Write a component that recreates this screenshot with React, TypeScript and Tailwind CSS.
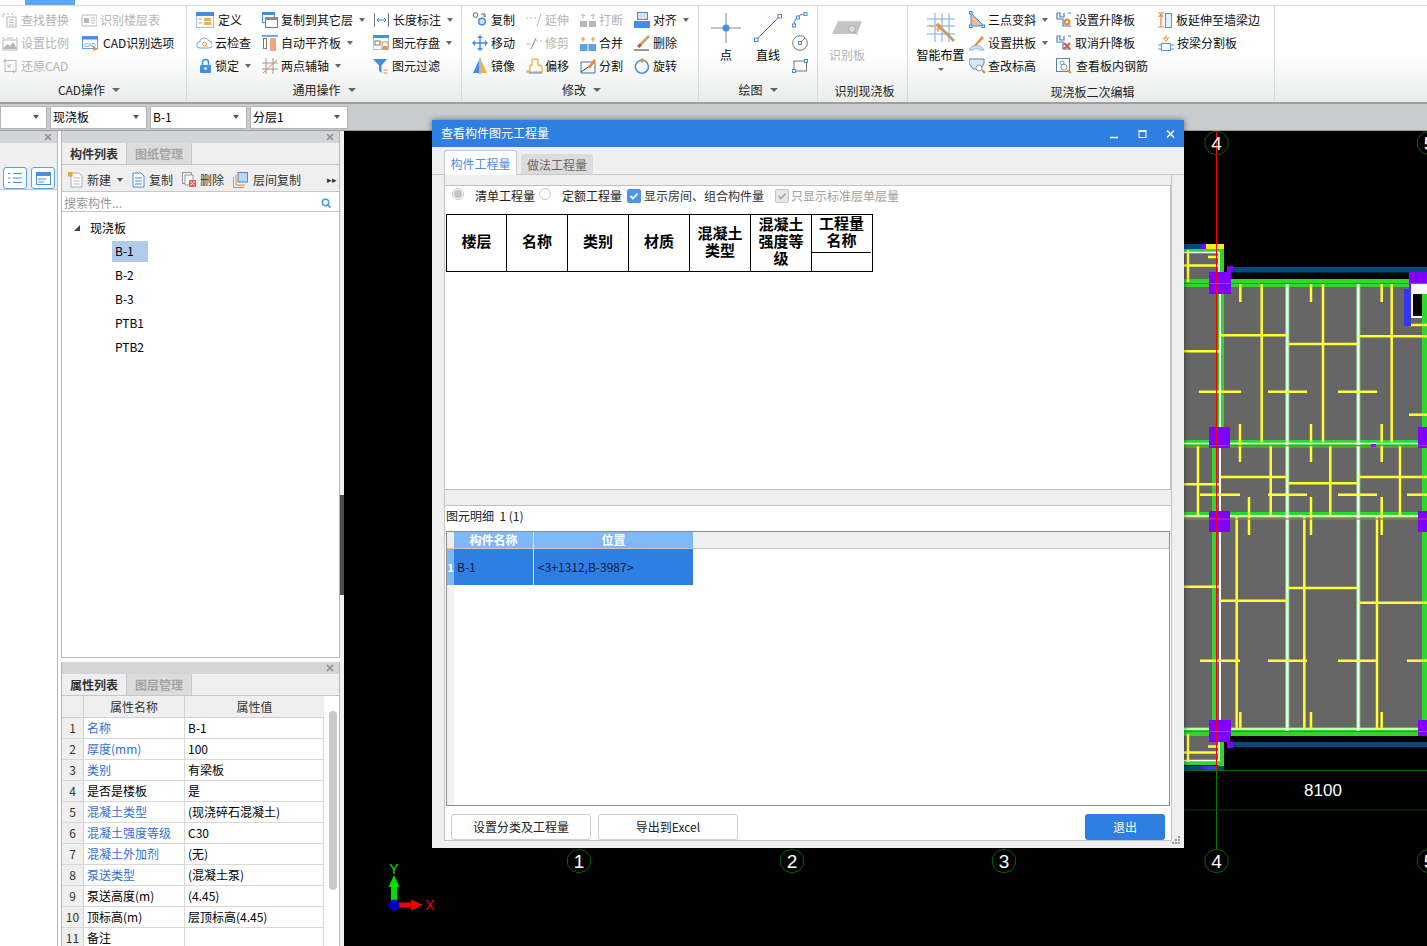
import React from "react";

const B = "#3f8ee8";
const O = "#f08a35";
const G = "#b8b8b8";

const S = ({ w = 16, h = 16, vb, children }: { w?: number; h?: number; vb?: string; children: React.ReactNode }) => (
  <svg width={w} height={h} viewBox={vb ?? `0 0 ${w} ${h}`} fill="none" className="shrink-0 block">
    {children}
  </svg>
);

const icons: Record<string, React.ReactNode> = {
  find: <S><rect x="5" y="5" width="9" height="10" stroke={G} /><path d="M7 8h5M7 10.500h5M7 13h5M1 2h2M5 2h2M9 2h2M1 2v3" stroke={G} /></S>,
  floor: <S><rect x="1" y="3" width="15" height="11" rx="1" stroke={G} /><rect x="3" y="6" width="5" height="5" fill={G} /><path d="M10 6h4M10 8.500h4M10 11h4" stroke={G} /></S>,
  scale: <S><path d="M1 14l4-5 3 2 3-4 4 7z" fill={G} /><rect x="1" y="5" width="14" height="10" stroke={G} /><path d="M1 2v2M15 2v2M5 3h6" stroke={G} /></S>,
  cad: <S><rect x="0.500" y="1.500" width="15" height="12" fill="#fff" stroke="#5ba3ee" /><rect x="0.500" y="1.500" width="15" height="3" fill={B} /><text x="2" y="11.500" fontSize="5.500" fill={B} fontFamily="Liberation Sans">CAD</text><path d="M11 11l5 3-5 2z" fill={O} /></S>,
  restore: <S><rect x="3" y="2.500" width="11" height="11" stroke={G} /><path d="M1 3h3M3 1v3M12 12v3M6 9l3-3M6 6v3h3" stroke={G} /></S>,
  define: <S w={18} h={16}><rect x="0.500" y="0.500" width="17" height="15" fill="#fff" stroke="#9cc5f0" /><rect x="0" y="0" width="18" height="4" fill={B} /><path d="M3 7h3M3 11h3" stroke="#999" /><rect x="8" y="6" width="7" height="3" fill="#f3b14e" /><rect x="8" y="10" width="7" height="3" fill="#f3b14e" /></S>,
  cloud: <S><path d="M4 13a3 3 0 0 1-.5-6A5 5 0 0 1 13 6a3.500 3.500 0 0 1 0 7z" stroke="#64a8ec" fill="#fff" /><circle cx="8.500" cy="9" r="2" stroke={O} /><path d="M10 10.500l1.500 1.500" stroke={O} /></S>,
  lock: <S w={13} h={16}><path d="M3.500 7V4.500a3 3 0 0 1 6 0V7" stroke={B} strokeWidth="1.500" /><rect x="1" y="7" width="11" height="8" rx="1" fill={B} /><circle cx="6.500" cy="10.500" r="1.300" fill="#fff" /></S>,
  copyfloor: <S><rect x="0.500" y="0.500" width="12" height="10" fill="#fff" stroke={B} /><rect x="0" y="0" width="13" height="3" fill={B} /><rect x="3.500" y="5.500" width="12" height="10" fill="#fff" stroke="#777" /><rect x="3" y="5" width="13" height="3" fill="#8a8a8a" /></S>,
  align: <S><path d="M0 1h16" stroke={B} strokeWidth="1.500" /><rect x="1.500" y="3.500" width="3" height="10" fill="#fff" stroke="#777" /><rect x="8" y="3" width="6" height="13" fill="#f4a47a" /></S>,
  axis: <S><path d="M4 0v16M11 0v16M0 5h16M0 11h16" stroke="#9a9a9a" /><path d="M1 15L15 2" stroke={O} /></S>,
  dim: <S w={15} h={16}><path d="M.5 1v14M14.500 1v14" stroke="#777" /><path d="M3 8h9M3 8l2-2M3 8l2 2M12 8l-2-2M12 8l-2 2" stroke={B} /></S>,
  save: <S><rect x="0.500" y="0.500" width="15" height="14" fill="#fff" stroke="#9cc5f0" /><rect width="16" height="3" fill={B} /><rect x="2" y="6" width="5" height="4" stroke="#777" /><rect x="9" y="7" width="6" height="7" fill="#fff" stroke={O} /><rect x="10" y="11" width="4" height="3" fill={O} /></S>,
  filter: <S w={15} h={16}><path d="M0 1h14L8.500 7.500V15L6 13V7.500z" fill={B} /><path d="M10.500 12h4M10.500 15h4" stroke={O} /></S>,
  copy: <S><circle cx="3.500" cy="3" r="2.300" stroke="#666" /><circle cx="10" cy="9.500" r="3.300" fill="#cfe3f8" stroke={B} strokeWidth="1.500" /><path d="M9 2h4v3M13 5l-2-1.500" stroke="#666" /></S>,
  move: <S><path d="M8 2v12M2 8h12" stroke={B} strokeWidth="1.500" /><path d="M8 0l3 3H5zM8 16l3-3H5zM0 8l3-3v6zM16 8l-3-3v6z" fill={B} /></S>,
  mirror: <S><path d="M7 2v13H1z" fill={B} /><path d="M9 2v13h6z" fill="#f5b52e" /><path d="M8 0v16" stroke="#777" /></S>,
  extend: <S><path d="M0 6h2M4 6h2M8 6h2" stroke={G} /><path d="M11 14L15 2" stroke={G} /></S>,
  trim: <S><path d="M0 9h5M10 6h2M14 6h2" stroke={G} strokeWidth="1" /><path d="M5 14L10 3" stroke="#888" /></S>,
  offset: <S w={17} h={16}><path d="M1 13h3V8a1 1 0 0 1 1-1h1V3a2 2 0 0 1 2-2h2a2 2 0 0 1 2 2v4h1a3 3 0 0 1 3 3v4H1z" fill="#fff" stroke="#f3b14e" strokeWidth="1.300" /><path d="M3 15h13" stroke={B} /></S>,
  breakk: <S><rect x="0" y="9" width="7" height="6" fill={G} /><rect x="9" y="9" width="7" height="6" fill={G} /><path d="M3 2v5M13 2v5" stroke={G} /><path d="M1 4l2-2 2 2M11 4l2-2 2 2" stroke={G} /></S>,
  merge: <S><rect x="0" y="9" width="16" height="7" fill="#5ba3ee" /><path d="M8 9v7" stroke="#fff" /><path d="M3 2v5M13 2v5M1 4h4M11 4h4" stroke={O} /></S>,
  split: <S w={16} h={17}><path d="M1 5h14v11H1z" stroke="#4a6fa5" /><path d="M1 15L14 6" stroke="#555" /><path d="M8 10l6-8 2 1.500-6 8z" fill={O} /></S>,
  alignr: <S><rect x="3.500" y="0.500" width="10" height="7" fill="#cfe3f8" stroke={B} /><rect x="0" y="9" width="16" height="7" fill={B} /></S>,
  del: <S w={16} h={17}><path d="M6 9L14 1l2 2-8 8z" fill="#c5a574" /><path d="M6 9l2 2-2.500 3L3 12z" fill="#c8501e" /><path d="M0 16h15" stroke="#333" /></S>,
  rotate: <S><path d="M7 2.300A6.500 6.500 0 1 0 11 3" stroke={B} strokeWidth="1.500" /><path d="M7 0l5 2.500L7 5z" fill={O} /></S>,
  arc: <S w={16} h={16}><path d="M2 14C2 7 7 2 13 2" stroke="#777" /><rect x="0.500" y="12" width="3" height="3" fill="#fff" stroke={B} /><rect x="12" y="0.500" width="3" height="3" fill="#fff" stroke={B} /><rect x="4.500" y="4" width="3" height="3" fill="#fff" stroke={B} /></S>,
  circle: <S w={16} h={16}><circle cx="8" cy="8" r="7.300" stroke="#777" /><rect x="6.500" y="6.500" width="3" height="3" fill="#fff" stroke={B} /><path d="M10 6l3-3" stroke="#777" /></S>,
  rect: <S w={16} h={14}><rect x="2" y="2" width="12.500" height="10" stroke="#777" /><rect x="0.500" y="10.500" width="3" height="3" fill="#fff" stroke={B} /><rect x="12.500" y="0.500" width="3" height="3" fill="#fff" stroke={B} /></S>,
  threept: <S w={16} h={17}><path d="M2 2v13h13z" fill="#f4b892" stroke={B} /><rect x="0.500" y="0.500" width="2.500" height="2.500" fill="#fff" stroke={B} /><rect x="0.500" y="14" width="2.500" height="2.500" fill="#fff" stroke={B} /><rect x="13" y="14" width="2.500" height="2.500" fill="#fff" stroke={B} /></S>,
  arch: <S w={16} h={16}><path d="M6 9l7-8 2 2-7 7-3 1z" fill={O} /><path d="M0 15c3-6 11-6 15 0H11c-2-2-5-2-7 0z" fill="#cfe3f8" stroke="#7fb0e6" /></S>,
  elev: <S w={17} h={16}><path d="M0 1h15v4l-3 6H4L0 5z" fill="#d9e6f3" stroke="#5a84b0" /><circle cx="10" cy="10" r="3" fill="#fff" stroke="#8a9db0" /><path d="M13 12l3 3" stroke={O} strokeWidth="2" /></S>,
  rise: <S w={16} h={16}><path d="M1 1v6h6v7h8M1 1h3v4h4v-4M12 1h3" stroke="#4a7fc0" strokeWidth="1.200" /><circle cx="11" cy="10" r="3.500" fill={O} /><circle cx="11" cy="10" r="1.300" fill="#fff" /></S>,
  unrise: <S w={16} h={16}><path d="M1 1v6h6v7h8M1 1h3v4h4v-4M12 1h3" stroke="#4a7fc0" strokeWidth="1.200" /><path d="M8 8l6 6M14 8l-6 6" stroke="#d9573a" strokeWidth="2" /></S>,
  rebar: <S w={17} h={16}><rect x="0.500" y="0.500" width="13" height="13" fill="#fff" stroke="#5a84b0" /><circle cx="6" cy="5" r="2" stroke="#8a9db0" /><circle cx="8" cy="9" r="3" stroke="#8a9db0" /><path d="M11 12l4 3" stroke={O} strokeWidth="2" /></S>,
  ext: <S w={14} h={16}><rect x="7.500" y="1.500" width="6" height="14" fill="#e8f1fb" stroke="#5a94d8" /><path d="M3 15V3M1 5l2-3 2 3" stroke={O} strokeWidth="1.300" /><path d="M0 1h6M0 15h6" stroke={O} /></S>,
  beamsplit: <S w={16} h={16}><path d="M8 0v3M5.500 3h5L8 6.500z" stroke={O} /><rect x="3.500" y="8.500" width="9" height="7" fill="#fff" stroke="#5a94d8" /><path d="M0 10h3M13 10h3M0 14h3M13 14h3" stroke="#5a94d8" /></S>,
  "new": <S w={15} h={16}><path d="M3 1h8l3 3v11H3z" fill="#fff" stroke="#aaa" /><path d="M5 6h7M5 9h7M5 12h7" stroke="#bbb" /><rect x="0" y="0" width="4.500" height="4.500" fill="#f5a623" /></S>,
  pcopy: <S w={13} h={16}><path d="M1 1h8l3 3v11H1z" fill="#fff" stroke={B} /><path d="M3 6h7M3 9h7M3 12h7" stroke={B} /></S>,
  pdel: <S w={14} h={16}><path d="M0.500 0.500h9v11h-9z" stroke="#999" /><path d="M3 3h8v10H3z" fill="#fff" stroke="#999" /><rect x="7" y="8" width="7" height="7" fill="#e06060" /><path d="M8.500 9.500l4 4M12.500 9.500l-4 4" stroke="#fff" /></S>,
  pfloor: <S w={15} h={16}><path d="M0.500 15.500V5M0.500 15.500H11M3 13V3M3 13h9" stroke={O} /><rect x="5" y="0.500" width="9.500" height="9.500" fill="#bcd8f6" stroke={B} /></S>,
};

const Caret = () => <span className="ml-[6px] w-0 h-0 border-x-[3.5px] border-x-transparent border-t-[4px] border-t-[#666] shrink-0" />;

function Item({ icon, label, caret, off, w, gap = 3 }: { icon: string; label: string; caret?: boolean; off?: boolean; w?: string; gap?: number }) {
  return (
    <div className={`flex items-center h-[23px] whitespace-nowrap leading-none ${off ? "text-[#b4b4b4]" : "text-[#111]"}`}>
      <span className={`flex justify-center items-center shrink-0 ${w ?? "w-[16px]"}`}>{icons[icon]}</span>
      <span style={{ marginLeft: gap }}>{label}</span>
      {caret && <Caret />}
    </div>
  );
}

const Label = ({ children, caret }: { children: React.ReactNode; caret?: boolean }) => (
  <div className="h-[22px] flex items-center justify-center text-[#222] leading-none whitespace-nowrap">
    {children}
    {caret && <span className="ml-[7px] w-0 h-0 border-x-[4px] border-x-transparent border-t-[4px] border-t-[#666]" />}
  </div>
);

function Group({ w, label, caret, children, pl, labelClass }: { w: string; label: string; caret?: boolean; children: React.ReactNode; pl: string; labelClass?: string }) {
  return (
    <div className={`${w} h-full flex flex-col border-r border-[#d7dada] shrink-0`}>
      <div className={`flex h-[73px] pt-[2px] ${pl}`}>{children}</div>
      <div className={labelClass}><Label caret={caret}>{label}</Label></div>
    </div>
  );
}

function Ribbon() {
  return (
    <div className="h-[98px] flex bg-gradient-to-b from-white from-50% to-[#eaecec] border-b-2 border-[#9c9ea0] shrink-0">
      <Group w="w-[187px]" label="CAD操作" caret pl="pl-[2px]" labelClass="pr-[8px]">
        <div className="w-[79px]">
          <Item icon="find" label="查找替换" off />
          <Item icon="scale" label="设置比例" off />
          <Item icon="restore" label="还原CAD" off />
        </div>
        <div>
          <Item icon="floor" label="识别楼层表" off />
          <div className="ml-[1px]"><Item icon="cad" label="CAD识别选项" gap={5} /></div>
        </div>
      </Group>
      <Group w="w-[275px]" label="通用操作" caret pl="pl-[9px]">
        <div className="w-[66px]">
          <Item icon="define" label="定义" w="w-[18px]" gap={4} />
          <Item icon="cloud" label="云检查" gap={3} />
          <div className="ml-[3px]"><Item icon="lock" label="锁定" caret w="w-[13px]" /></div>
        </div>
        <div className="w-[111px]">
          <Item icon="copyfloor" label="复制到其它层" caret />
          <Item icon="align" label="自动平齐板" caret />
          <Item icon="axis" label="两点辅轴" caret />
        </div>
        <div>
          <Item icon="dim" label="长度标注" caret gap={4} />
          <Item icon="save" label="图元存盘" caret gap={3} />
          <Item icon="filter" label="图元过滤" w="w-[15px]" gap={4} />
        </div>
      </Group>
      <Group w="w-[237px]" label="修改" caret pl="pl-[10px]" labelClass="pl-[3px]">
        <div className="w-[54px]">
          <Item icon="copy" label="复制" />
          <Item icon="move" label="移动" />
          <Item icon="mirror" label="镜像" />
        </div>
        <div className="w-[54px]">
          <Item icon="extend" label="延伸" off />
          <Item icon="trim" label="修剪" off />
          <Item icon="offset" label="偏移" w="w-[17px]" gap={2} />
        </div>
        <div className="w-[54px]">
          <Item icon="breakk" label="打断" off />
          <Item icon="merge" label="合并" />
          <Item icon="split" label="分割" />
        </div>
        <div>
          <Item icon="alignr" label="对齐" caret />
          <Item icon="del" label="删除" />
          <Item icon="rotate" label="旋转" />
        </div>
      </Group>
      <Group w="w-[119px]" label="绘图" caret pl="pl-[11px]">
        <div className="w-[32px] flex flex-col items-center">
          <svg width="30" height="30" viewBox="0 0 30 30" className="mt-[5px]">
            <path d="M15 0v30M0 15h30" stroke="#888" />
            <circle cx="15" cy="15" r="3.500" fill={B} />
          </svg>
          <span className="mt-[6px] leading-none">点</span>
        </div>
        <div className="w-[50px] ml-[1px] flex flex-col items-center">
          <svg width="28" height="28" viewBox="0 0 28 28" className="mt-[6px]">
            <path d="M2 26L26 2" stroke="#666" />
            <rect x="0.500" y="24" width="3.500" height="3.500" fill="#fff" stroke={B} />
            <rect x="24" y="0.500" width="3.500" height="3.500" fill="#fff" stroke={B} />
          </svg>
          <span className="mt-[7px] leading-none">直线</span>
        </div>
        <div className="flex flex-col -ml-[1px]">
          <div className="h-[23px] flex items-center">{icons.arc}</div>
          <div className="h-[23px] flex items-center">{icons.circle}</div>
          <div className="h-[23px] flex items-center">{icons.rect}</div>
        </div>
      </Group>
      <div className="w-[90px] h-full flex flex-col border-r border-[#d7dada] shrink-0">
        <div className="h-[73px] w-[58px] flex flex-col items-center">
          <svg width="30" height="20" viewBox="0 0 30 20" className="mt-[13px]">
            <path d="M6 2h24l-5 13H0z" fill="#c4c4c4" />
            <path d="M6 2h24" stroke="#eee" />
            <circle cx="20" cy="10" r="3.500" fill="#ddd" stroke="#aaa" />
            <path d="M23 13l3 3" stroke="#aaa" />
          </svg>
          <span className="mt-[10px] leading-none text-[#b4b4b4] whitespace-nowrap">识别板</span>
        </div>
        <div className="pt-[4px] pl-[4px]"><Label>识别现浇板</Label></div>
      </div>
      <div className="w-[367px] h-full flex flex-col border-r border-[#d7dada] shrink-0">
        <div className="h-[73px] flex pt-[2px] pl-[4px]">
          <div className="w-[57px] flex flex-col items-center">
            <svg width="30" height="30" viewBox="0 0 30 30" className="mt-[4px]">
              <path d="M9 1v29M16 1v29M23 1v29M1 7h28M1 14h28M1 22h28" stroke="#74a9e6" />
              <path d="M12 11l17 17-2 2L10 13z" fill="#c99b6a" />
              <path d="M12 11l3 3-2 2-3-3z" fill={O} />
              <path d="M9 17h6M12 14v6M3 13l4 2" stroke={O} />
            </svg>
            <span className="mt-[7px] leading-none whitespace-nowrap">智能布置</span>
            <span className="mt-[7px] w-0 h-0 border-x-[3px] border-x-transparent border-t-[3px] border-t-[#666]" />
          </div>
          <div className="w-[87px]">
            <Item icon="threept" label="三点变斜" caret />
            <Item icon="arch" label="设置拱板" caret />
            <Item icon="elev" label="查改标高" />
          </div>
          <div className="w-[102px]">
            <Item icon="rise" label="设置升降板" />
            <Item icon="unrise" label="取消升降板" />
            <Item icon="rebar" label="查看板内钢筋" w="w-[17px]" gap={3} />
          </div>
          <div>
            <Item icon="ext" label="板延伸至墙梁边" w="w-[14px]" gap={4} />
            <Item icon="beamsplit" label="按梁分割板" gap={3} />
          </div>
        </div>
        <div className="pt-[4px] pl-[3px]"><Label>现浇板二次编辑</Label></div>
      </div>
    </div>
  );
}

const Combo = ({ w, text }: { w: string; text?: string }) => (
  <div className={`${w} h-[23px] bg-white border border-[#b4b4b4] flex items-center justify-between pl-[2px] pr-[7px] leading-none`}>
    <span>{text}</span>
    <span className="w-0 h-0 border-x-[3px] border-x-transparent border-t-[4px] border-t-[#555]" />
  </div>
);

const X = () => (
  <svg width="8" height="8" viewBox="0 0 8 8">
    <path d="M1 1l6 6M7 1L1 7" stroke="#8b8b8b" strokeWidth="1.500" />
  </svg>
);

const PanelHead = () => (
  <div className="h-[12px] bg-[#d3d5d9] flex items-center justify-end pr-[5px] shrink-0"><X /></div>
);

const Tabs = ({ a, b }: { a: string; b: string }) => (
  <div className="h-[22px] flex bg-[#efefef] border-b border-[#c4c6c8] shrink-0">
    <div className="w-[65px] flex items-center justify-center font-bold text-[#333] leading-none border-r border-[#c9c9c9]">{a}</div>
    <div className="w-[65px] flex items-center justify-center font-bold text-[#a4a4a4] bg-[#dcdcdc] leading-none border-r border-[#c9c9c9]">{b}</div>
  </div>
);

function ComponentPanel() {
  const tree = ["B-1", "B-2", "B-3", "PTB1", "PTB2"];
  return (
    <div className="w-[279px] h-[527px] border-x border-b border-[#b4b6b8] flex flex-col bg-white">
      <PanelHead />
      <Tabs a="构件列表" b="图纸管理" />
      <div className="h-[27px] pt-[3px] bg-[#efefef] border-b border-[#c4c6c8] flex items-center pl-[6px] text-[#333] leading-none shrink-0">
        {icons["new"]}
        <span className="ml-[4px]">新建</span>
        <span className="ml-[6px] w-0 h-0 border-x-[3px] border-x-transparent border-t-[4px] border-t-[#555]" />
        <span className="ml-[9px]">{icons.pcopy}</span>
        <span className="ml-[4px]">复制</span>
        <span className="ml-[9px]">{icons.pdel}</span>
        <span className="ml-[4px]">删除</span>
        <span className="ml-[9px]">{icons.pfloor}</span>
        <span className="ml-[5px]">层间复制</span>
        <span className="ml-[26px] text-[9px] text-[#333]">▸▸</span>
      </div>
      <div className="h-[20px] pt-[3px] border-b border-[#c4c6c8] flex items-center justify-between pl-[2px] pr-[8px] text-[#999] leading-none shrink-0">
        <span>搜索构件...</span>
        <svg width="10" height="11" viewBox="0 0 10 11">
          <circle cx="4.500" cy="4.500" r="3.200" stroke="#4a9bd8" strokeWidth="1.500" fill="none" />
          <path d="M7 7l2.500 3" stroke="#4a9bd8" strokeWidth="1.500" />
        </svg>
      </div>
      <div className="pt-[5px] leading-none">
        <div className="h-[22px] flex items-center pl-[12px]">
          <span className="w-0 h-0 border-b-[6px] border-b-[#444] border-l-[6px] border-l-transparent" />
          <span className="ml-[10px]">现浇板</span>
        </div>
        {tree.map((t, i) => (
          <div key={t} className="h-[24px] flex items-center pl-[50px]">
            <span className={`h-[21px] flex items-center w-[36px] pl-[3px] ${i === 0 ? "bg-[#b0ccec]" : ""}`}>{t}</span>
          </div>
        ))}
      </div>
    </div>
  );
}

const props: [string, string, boolean][] = [
  ["名称", "B-1", true],
  ["厚度(mm)", "100", true],
  ["类别", "有梁板", true],
  ["是否是楼板", "是", false],
  ["混凝土类型", "(现浇碎石混凝土)", true],
  ["混凝土强度等级", "C30", true],
  ["混凝土外加剂", "(无)", true],
  ["泵送类型", "(混凝土泵)", true],
  ["泵送高度(m)", "(4.45)", false],
  ["顶标高(m)", "层顶标高(4.45)", false],
  ["备注", "", false],
];

function PropPanel() {
  return (
    <div className="w-[279px] flex-1 border-x border-[#b4b6b8] flex flex-col bg-white overflow-hidden">
      <PanelHead />
      <Tabs a="属性列表" b="图层管理" />
      <div className="flex flex-1">
        <div className="w-[262px] leading-none">
          <div className="h-[22px] flex bg-[#efefef] text-[#333] border-b border-[#d0d0d0]">
            <div className="w-[22px] border-r border-[#d0d0d0]" />
            <div className="w-[101px] border-r border-[#d0d0d0] flex items-center justify-center">属性名称</div>
            <div className="flex-1 flex items-center justify-center">属性值</div>
          </div>
          {props.map(([n, v, link], i) => (
            <div key={n} className="h-[21px] flex border-b border-[#d8d8d8] border-r">
              <div className="w-[22px] bg-[#efefef] border-r border-[#d0d0d0] flex items-center justify-center text-[#333]">{i + 1}</div>
              <div className={`w-[101px] border-r border-[#d8d8d8] flex items-center pl-[3px] whitespace-nowrap ${link ? "text-[#2f6fe0]" : ""}`}>{n}</div>
              <div className="flex-1 flex items-center pl-[3px] whitespace-nowrap">{v}</div>
            </div>
          ))}
        </div>
        <div className="flex-1 pt-[15px] pl-[5px]">
          <div className="w-[8px] h-[179px] rounded-[4px] bg-[#c9c9c9]" />
        </div>
      </div>
    </div>
  );
}

const yellow: number[][] = [
  [1240.3,283,1240.3,302],[1261.7,283,1261.7,442],[1311,283,1311,302],[1323,283,1323,442],[1381.7,283,1381.7,302],[1391.7,283,1391.7,442],
  [1220,335.300,1287,335.300],[1287,344,1357,344],[1358,336.300,1427,336.300],[1184,351.300,1219,351.300],
  [1199,391.700,1241,391.700],[1268,391.700,1307,391.700],[1338,391.700,1377,391.700],[1409,414.700,1427,414.700],[1409,325,1427,325],
  [1240,424,1240,442],[1311,424,1311,442],[1381.7,424,1381.7,442],
  [1198,445,1198,515],[1270.7,445,1270.7,515],[1330.3,445,1330.3,515],[1400,445,1400,515],
  [1220,477,1287,477],[1358,477,1427,477],[1287,483.300,1357,483.300],[1184,484.300,1219,484.300],
  [1200,494.700,1240,494.700],[1268,494.700,1307,494.700],[1338,494.700,1377,494.700],[1407,494.700,1427,494.700],
  [1240,440,1240,462],[1311,445,1311,462],[1381.7,445,1381.7,462],[1249,497,1249,535],[1311,497,1311,535],[1381.7,497,1381.7,535],
  [1236.7,517,1236.7,730],[1304.3,517,1304.3,730],[1377,517,1377,730],
  [1184,586.700,1219,586.700],[1220,600.700,1287,600.700],[1287,588,1357,588],[1358,602.700,1427,602.700],
  [1200,660.700,1240,660.700],[1268,660.700,1307,660.700],[1338,660.700,1377,660.700],[1407,660.700,1427,660.700],
  [1240.3,712,1240.3,730],[1311,712,1311,730],[1381.7,712,1381.7,730],
  [1188,250,1188,282],[1184,265.500,1218,265.500],[1208,257,1220,257],
  [1188,734,1188,762],[1184,752.500,1218,752.500],[1208,746.500,1220,746.500],
];

const purple: number[][] = [
  [1209,272,22,22],[1409,272,18,22],[1209,427,21,21],[1418,427,9,21],[1209,511,21,21],[1418,511,9,21],[1209,720,22,22],[1418,720,9,22],
  [1227,266,6,6],[1227,742,6,6],[1201,244,5,5],[1201,766,5,4],[1371,444,5,3],
];

const Bubble = ({ x, y, t }: { x: number; y: number; t: string }) => {
  const pts = Array.from({ length: 10 }, (_, i) => {
    const a = (Math.PI * 2 * i) / 10;
    return `${x + 12 * Math.sin(a)},${y - 12 * Math.cos(a)}`;
  }).join(" ");
  return (
    <g>
      <polygon points={pts} stroke="#0a640a" fill="none" />
      <text x={x} y={y + 7} fontSize="19" fill="#fff" textAnchor="middle" fontFamily="Liberation Sans">{t}</text>
    </g>
  );
};

function Plan() {
  return (
    <svg viewBox="344 131 1083 815" width="1083" height="815" className="block">
      <rect x="344" y="131" width="1083" height="815" fill="#000" />
      <rect x="1184" y="252" width="34" height="28" fill="#666" />
      <rect x="1184" y="736" width="34" height="24" fill="#666" />
      <rect x="1184" y="287" width="243" height="441" fill="#666" />
      <rect x="1228" y="267" width="199" height="5.500" fill="#004a80" />
      <rect x="1228" y="742" width="199" height="5" fill="#004a80" />
      <rect x="1184" y="244" width="17" height="5" fill="#004a80" />
      <rect x="1206" y="244" width="18" height="5" fill="#f0f020" />
      <rect x="1184" y="249" width="40" height="3" fill="#2fd62f" />
      <rect x="1218" y="249" width="6" height="31" fill="#2fd62f" />
      <rect x="1184" y="766" width="40" height="4.500" fill="#004a80" />
      <rect x="1206" y="766" width="12" height="4" fill="#3040f0" />
      <rect x="1184" y="761" width="40" height="4" fill="#2fd62f" />
      <rect x="1218" y="736" width="6" height="30" fill="#2fd62f" />
      {[279, 440, 512, 727].map((y) => (
        <rect key={y} x="1184" y={y} width="243" height={y === 279 ? 8 : y === 727 ? 9 : 7.500} fill="#2fd62f" />
      ))}
      <rect x="1212" y="447" width="4" height="285" fill="#2fd62f" />
      <rect x="1218" y="287" width="6" height="155" fill="#2fd62f" />
      <rect x="1422" y="294" width="5" height="436" fill="#2fd62f" />
      {[1287.3, 1358.3].map((x) => (
        <rect key={x} x={x - 2} y="283" width="4" height="449" fill="#7fe67f" />
      ))}
      {[1220, 1287.3, 1358.3].map((x) => (
        <rect key={x} x={x - 1} y="283" width="2" height="449" fill="#fff" />
      ))}
      <path d="M1184 252.500h35V282M1184 760.500h35V736" stroke="#fff" strokeWidth="1.500" fill="none" />
      <path d="M1184 443.500h243M1184 516h243M1184 729h243" stroke="#fff" strokeWidth="1.500" />
      {yellow.map(([a, b, c, d], i) => (
        <line key={i} x1={a} y1={b} x2={c} y2={d} stroke="#ffff33" strokeWidth="2.500" />
      ))}
      {purple.map(([x, y, w, h], i) => (
        <rect key={i} x={x} y={y} width={w} height={h} fill="#8000ff" />
      ))}
      <rect x="1404" y="289" width="7" height="37" fill="#3535f5" />
      <rect x="1411" y="283" width="16" height="35" fill="#fff" />
      <rect x="1413" y="294" width="9" height="22" fill="#000" />
      <rect x="1422" y="294" width="5" height="24" fill="#2fd62f" />
      <rect x="1230" y="736" width="197" height="6" fill="#000" />
      <path d="M1184 283.500h243M1184 445.700h243M1184 519h243M1184 731.500h243" stroke="#e8334a" />
      <line x1="1216.500" y1="131" x2="1216.500" y2="770" stroke="#ff0000" />
      <line x1="1216.500" y1="770" x2="1216.500" y2="850" stroke="#0a7a0a" />
      <line x1="1184" y1="770.500" x2="1427" y2="770.500" stroke="#0a6a0a" />
      <line x1="1184" y1="810" x2="1427" y2="810" stroke="#004000" />
      <text x="1323" y="796" fontSize="17" fill="#fff" textAnchor="middle" fontFamily="Liberation Sans">8100</text>
      <Bubble x={1216.500} y={143} t="4" />
      <Bubble x={1429} y={143} t="5" />
      <Bubble x={579} y={861} t="1" />
      <Bubble x={792} y={861} t="2" />
      <Bubble x={1004} y={861} t="3" />
      <Bubble x={1216.500} y={861} t="4" />
      <Bubble x={1429} y={861} t="5" />
      <rect x="391" y="885" width="6" height="20" fill="#00e000" />
      <path d="M388.500 887l5.500-12 5.500 12z" fill="#00e000" />
      <text x="394" y="874" fontSize="14" fill="#00e000" textAnchor="middle" fontFamily="Liberation Sans">Y</text>
      <rect x="394" y="902.500" width="18" height="5" fill="#f00000" />
      <path d="M411 899.500l12 5.500-12 5.500z" fill="#f00000" />
      <text x="430" y="910" fontSize="14" fill="#f00000" textAnchor="middle" fontFamily="Liberation Sans">X</text>
      <circle cx="394" cy="905" r="5.500" fill="#0000c8" />
    </svg>
  );
}

const Radio = ({ on }: { on?: boolean }) => (
  <span className="w-[12px] h-[12px] rounded-full border border-[#c8c8c8] bg-white flex items-center justify-center shrink-0">
    {on && <span className="w-[8px] h-[8px] rounded-full bg-[#c4c4c4]" />}
  </span>
);

const Check = ({ on }: { on?: boolean }) => (
  <span className={`w-[14px] h-[14px] rounded-[2px] flex items-center justify-center shrink-0 border ${on ? "bg-[#4a96ec] border-[#4a96ec]" : "bg-[#e8e8e8] border-[#c4c4c4]"}`}>
    <svg width="10" height="10" viewBox="0 0 10 10">
      <path d="M1.500 5l2.500 2.500L8.500 2.500" stroke={on ? "#fff" : "#a8a8a8"} strokeWidth="1.800" fill="none" />
    </svg>
  </span>
);

const heads = ["楼层", "名称", "类别", "材质", "混凝土类型", "混凝土强度等级"];

function Dialog() {
  return (
    <div className="absolute left-[432px] top-[120px] w-[752px] h-[728px] bg-[#efefef] flex flex-col shadow-[0_0_6px_rgba(0,0,0,0.5)]">
      <div className="h-[27px] bg-[#2e7fe1] flex items-center pl-[9px] pr-[4px] text-white leading-none shrink-0">
        <span className="-mt-[2px]">查看构件图元工程量</span>
        <div className="ml-auto flex items-center">
          <svg width="84" height="14" viewBox="0 0 84 14">
            <path d="M14 10.500h8" stroke="#fff" strokeWidth="1.500" />
            <rect x="43" y="3.500" width="7" height="7" stroke="#fff" strokeWidth="1" fill="none" />
            <path d="M43 4h7" stroke="#fff" strokeWidth="2" />
            <path d="M71 3.500l7 7M78 3.500l-7 7" stroke="#fff" strokeWidth="1.500" />
          </svg>
        </div>
      </div>
      <div className="h-[28px] flex items-end pl-[12px] shrink-0 border-b border-[#c8c8c8]">
        <div className="w-[73px] h-[25px] pt-[1px] bg-white border border-b-0 border-[#c8c8c8] rounded-t-[3px] text-[#4a90e2] flex items-center justify-center leading-none -mb-px">构件工程量</div>
        <div className="ml-[4px] w-[72px] h-[20px] pt-[2px] bg-[#dcdcdc] rounded-t-[3px] text-[#666] flex items-center justify-center leading-none">做法工程量</div>
      </div>
      <div className="mx-[12px] w-[728px] h-[666px] flex flex-col border-x border-b border-[#c4c4c4]">
        <div className="h-[10px] shrink-0" />
        <div className="h-[305px] bg-white border-t border-b border-r border-[#c0c0c0] shrink-0">
          <div className="h-[20px] mb-[8px] flex items-center leading-none whitespace-nowrap pl-[7px]">
            <span className="-mt-[4px]"><Radio on /></span>
            <span className="ml-[11px] text-[#222]">清单工程量</span>
            <span className="-mt-[4px] ml-[4px]"><Radio /></span>
            <span className="ml-[11px] text-[#222]">定额工程量</span>
            <span className="ml-[5px]"><Check on /></span>
            <span className="ml-[3px] text-[#333]">显示房间、组合构件量</span>
            <span className="ml-[11px]"><Check /></span>
            <span className="ml-[2px] text-[#a0a0a0]">只显示标准层单层量</span>
          </div>
          <div className="ml-[1px] w-[427px] h-[58px] border border-black flex font-bold text-[15px] leading-[17px] text-black">
            {heads.map((h, i) => (
              <div key={h} className={`${i === 0 ? "w-[60px]" : "w-[61px]"} border-r border-black flex items-center justify-center text-center px-[4px] pb-[5px] shrink-0`}>{h}</div>
            ))}
            <div className="w-[59px] flex flex-col shrink-0">
              <div className="h-[38px] border-b border-black flex items-center justify-center text-center px-[4px] pb-[5px]">工程量名称</div>
              <div className="flex-1" />
            </div>
          </div>
        </div>
        <div className="h-[15px] shrink-0" />
        <div className="flex-1 bg-white border-t border-[#c0c0c0] flex flex-col">
          <div className="h-[25px] pb-[6px] flex items-center pl-[1px] leading-none shrink-0 text-[#222]">图元明细&nbsp;&nbsp;1 (1)</div>
          <div className="mx-[1px] h-[275px] border border-[#8c8c8c] flex flex-col leading-none shrink-0">
            <div className="h-[17px] bg-[#efefef] border-b border-[#c8c8c8] flex shrink-0">
              <div className="w-[7px]" />
              <div className="w-[80px] bg-[#7eb8f8] border-r border-[#d8e8fa] text-white font-bold flex items-center justify-center">构件名称</div>
              <div className="w-[159px] bg-[#7eb8f8] text-white font-bold flex items-center justify-center">位置</div>
            </div>
            <div className="h-[36px] flex shrink-0">
              <div className="w-[7px] bg-[#7eb8f8] text-white font-bold flex items-center justify-center text-[11px]">1</div>
              <div className="w-[80px] bg-[#2e7fe1] border-r border-[#d8e8fa] flex items-center pl-[3px] text-[#0a1a3a]">B-1</div>
              <div className="w-[159px] bg-[#2e7fe1] flex items-center pl-[4px] text-[#0a1a3a] whitespace-nowrap">&lt;3+1312,B-3987&gt;</div>
            </div>
            <div className="flex-1 w-[7px] bg-[#f2f2f2]" />
          </div>
          <div className="flex-1 flex items-end px-[6px] leading-none">
            <div className="w-[140px] h-[26px] border border-[#cfcfcf] rounded-[3px] bg-white flex items-center justify-center text-[#222]">设置分类及工程量</div>
            <div className="ml-[7px] w-[140px] h-[26px] border border-[#cfcfcf] rounded-[3px] bg-white flex items-center justify-center text-[#222]">导出到Excel</div>
            <div className="ml-auto w-[80px] h-[26px] rounded-[3px] bg-[#2e7fe1] text-white flex items-center justify-center">退出</div>
          </div>
        </div>
      </div>
      <svg width="9" height="9" viewBox="0 0 9 9" className="absolute right-[3px] bottom-[3px]">
        <path d="M6 0h2v2H6zM3 3h2v2H3zM6 3h2v2H6zM0 6h2v2H0zM3 6h2v2H3zM6 6h2v2H6z" fill="#999" />
      </svg>
    </div>
  );
}

export default function App() {
  return (
    <div className="relative w-[1427px] h-[946px] overflow-hidden flex flex-col bg-white text-xs text-black font-['Noto_Sans_CJK_SC','Noto_Sans',sans-serif]">
      <div className="h-[5px] bg-white pl-[25px] shrink-0">
        <div className="w-[50px] h-full bg-[#5aa5f5]" />
      </div>
      <div className="h-px bg-[#dcdcdc] shrink-0" />
      <Ribbon />
      <div className="h-[27px] bg-[#c9cbce] flex items-center gap-[3px] shrink-0 border-b border-[#9a9c9e]">
        <Combo w="w-[47px]" />
        <Combo w="w-[97px]" text="现浇板" />
        <Combo w="w-[97px]" text="B-1" />
        <Combo w="w-[98px]" text="分层1" />
      </div>
      <div className="flex flex-1 min-h-0">
        <div className="w-[58px] border-r border-[#b4b6b8] flex flex-col shrink-0">
          <PanelHead />
          <div className="h-[47px] bg-[#efefef] border-b border-[#c4c6c8] flex items-end gap-[4px] pl-[3px]">
            <div className="w-[24px] h-[22px] rounded-[3px] border border-[#5ba3ee] bg-white flex items-center justify-center">
              <svg width="14" height="12" viewBox="0 0 14 12"><path d="M5 1.500h9M5 6h9M5 10.500h9M0 1.500h2.500M0 6h2.500M0 10.500h2.500" stroke="#4a90e2" /></svg>
            </div>
            <div className="w-[24px] h-[22px] rounded-[3px] border border-[#5ba3ee] bg-white flex items-center justify-center">
              <svg width="15" height="13" viewBox="0 0 15 13"><rect x="0.500" y="0.500" width="14" height="12" stroke="#4a90e2" fill="none" /><rect width="15" height="4" fill="#4a90e2" /><path d="M2 7h8M2 10h6" stroke="#4a90e2" /></svg>
            </div>
          </div>
        </div>
        <div className="w-[3px] shrink-0" />
        <div className="flex flex-col w-[279px] shrink-0 gap-[4px]">
          <ComponentPanel />
          <PropPanel />
        </div>
        <div className="w-[4px] bg-[#f0f0f0] shrink-0 flex items-center">
          <div className="w-[4px] h-[100px] bg-[#4a4c50] mt-[12px]" />
        </div>
        <div className="flex-1 min-w-0 bg-black"><Plan /></div>
      </div>
      <Dialog />
    </div>
  );
}
